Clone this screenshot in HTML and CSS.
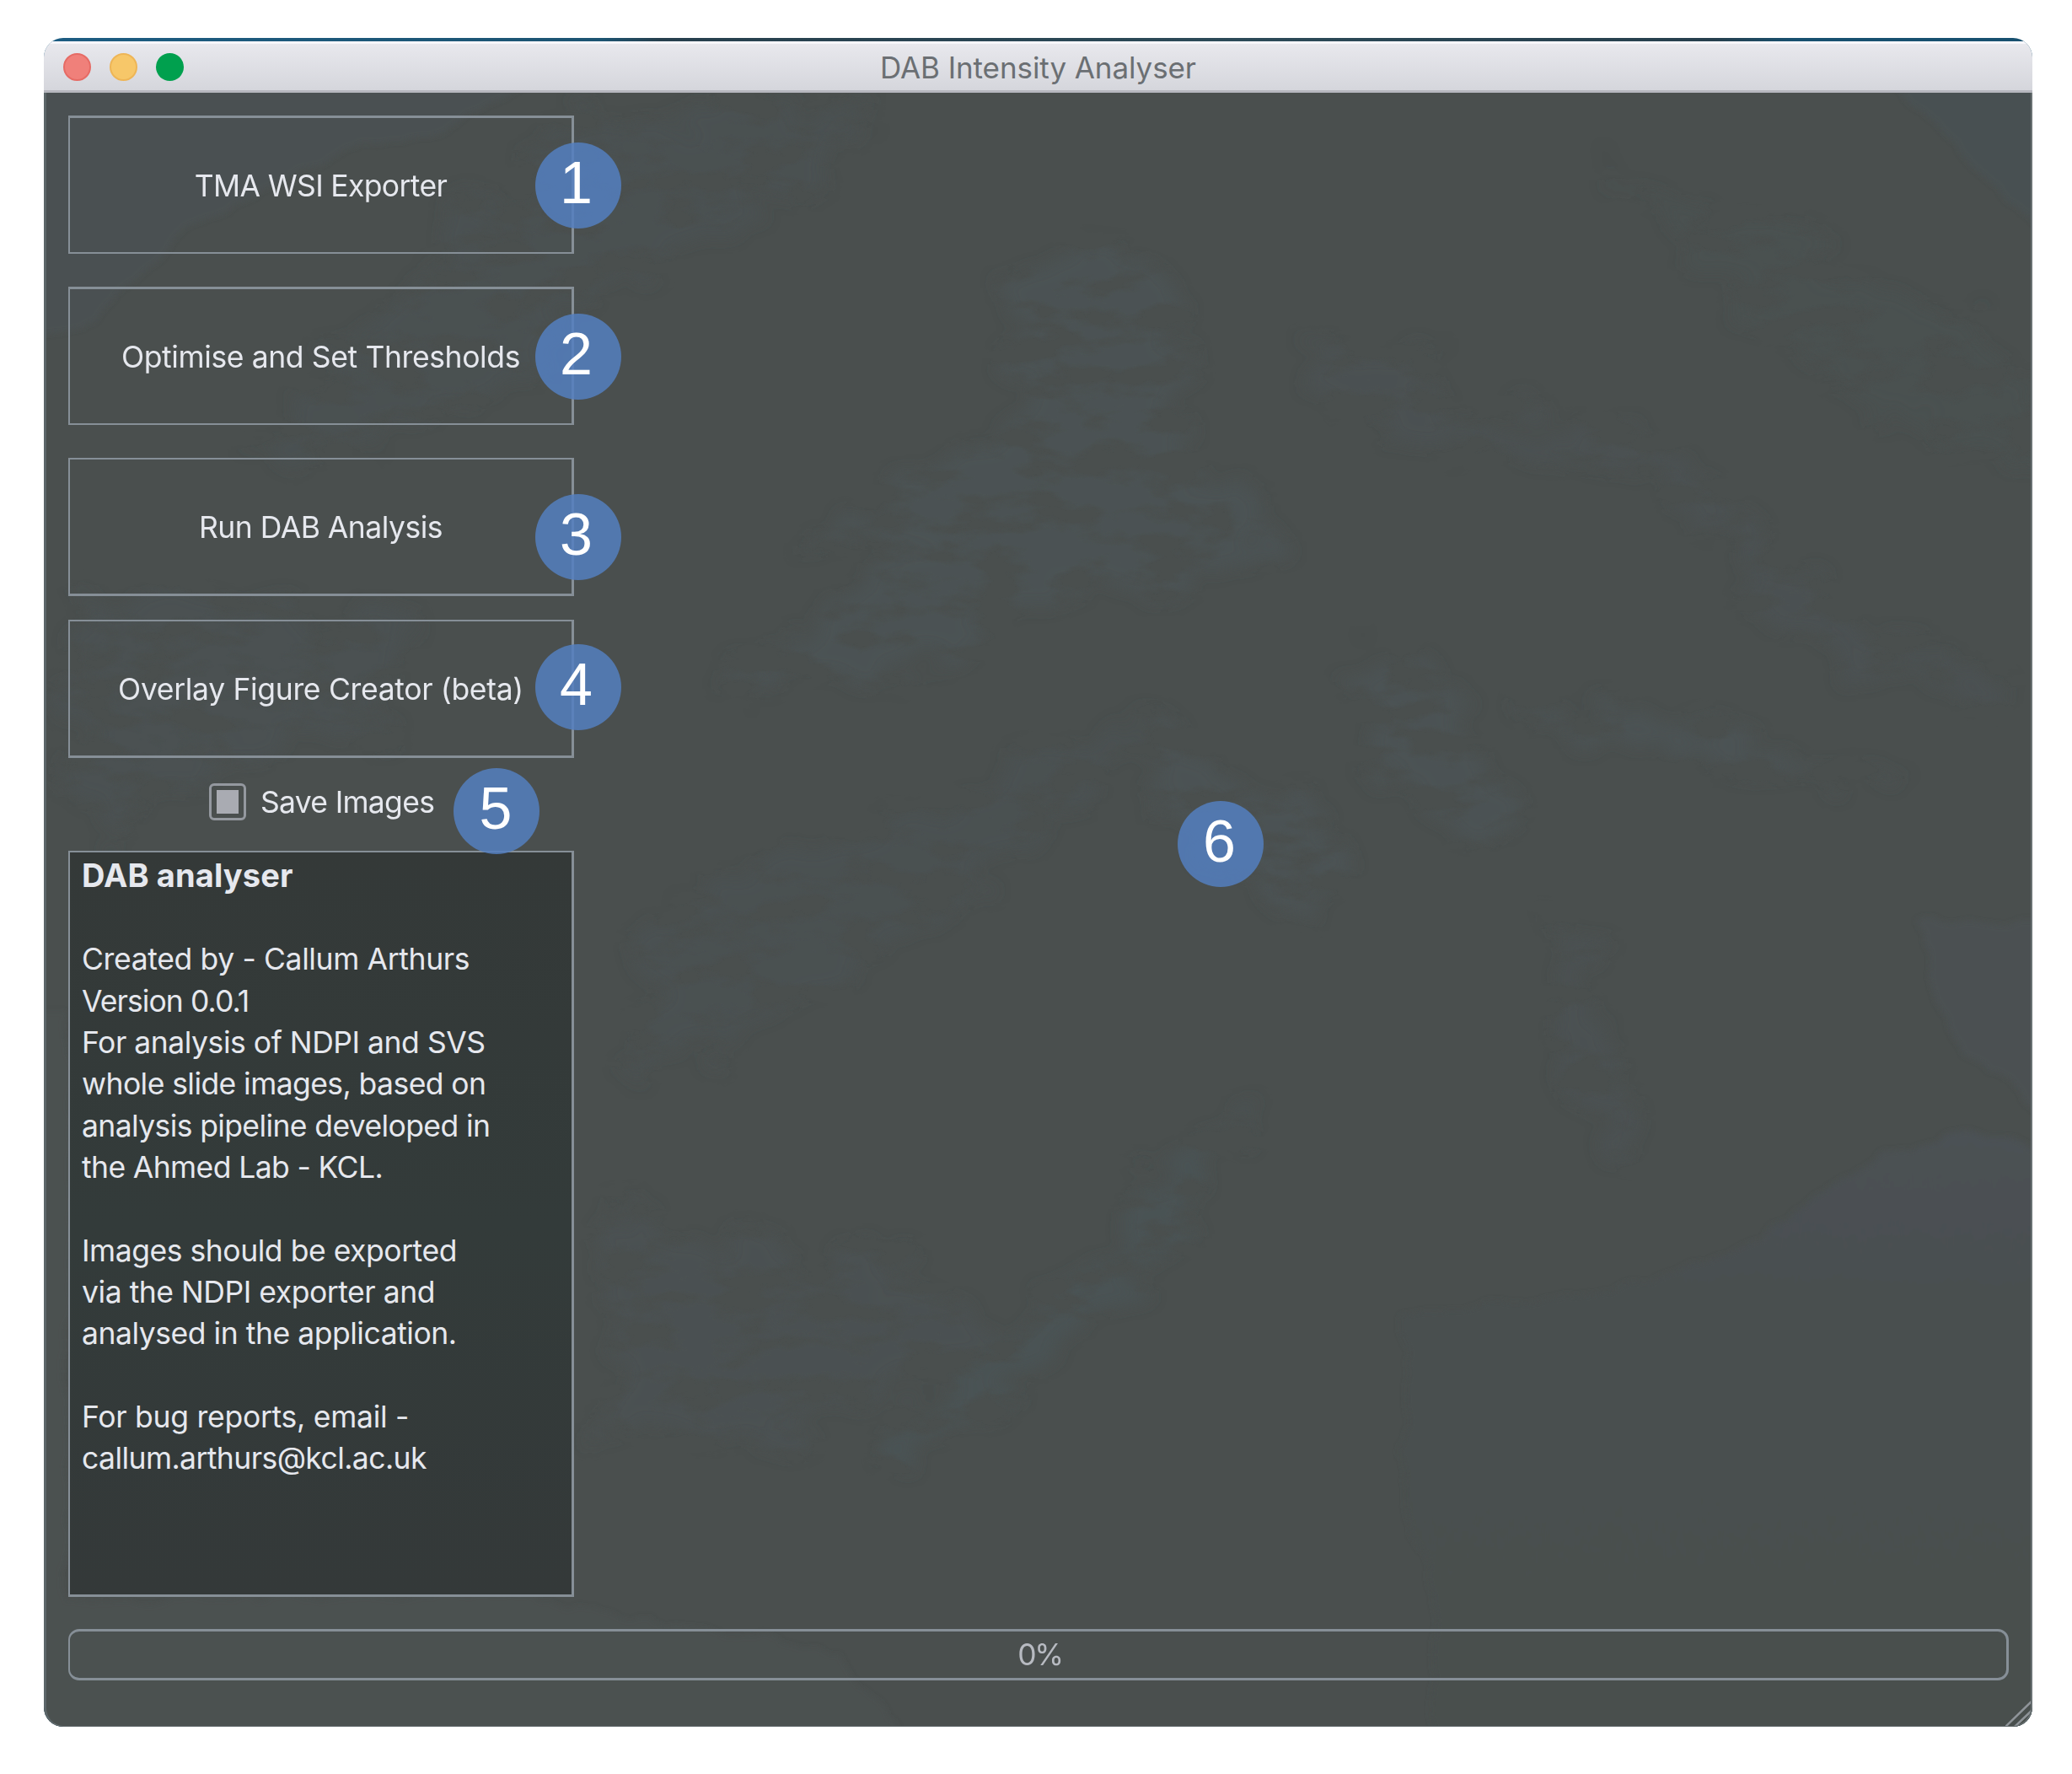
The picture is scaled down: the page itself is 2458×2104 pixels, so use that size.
FILE: index.html
```html
<!DOCTYPE html>
<html lang="en">
<head>
<meta charset="utf-8">
<title>DAB Intensity Analyser</title>
<link rel="stylesheet" href="styles.css">
</head>
<body>
<main class="window">
  <header class="titlebar">
    <div class="lights"><i class="light close"></i><i class="light minimise"></i><i class="light zoom"></i></div>
    <h1 class="title">DAB Intensity Analyser</h1>
  </header>
  <div class="content">
    <svg class="backdrop" viewBox="52 110 2359 1938" preserveAspectRatio="none" aria-hidden="true">
      <defs>
        <filter id="rough" x="-10%" y="-10%" width="120%" height="120%">
          <feTurbulence type="fractalNoise" baseFrequency="0.012 0.02" numOctaves="5" seed="4" result="n"/>
          <feDisplacementMap in="SourceGraphic" in2="n" scale="110" xChannelSelector="R" yChannelSelector="G"/>
          <feGaussianBlur stdDeviation="9" result="shape"/>
          <feTurbulence type="fractalNoise" baseFrequency="0.014 0.03" numOctaves="6" seed="11"/>
          <feColorMatrix values="0 0 0 0 1  0 0 0 0 1  0 0 0 0 1  5 0 0 0 -1.8" result="grain"/>
          <feComposite in="shape" in2="grain" operator="in"/>
        </filter>
        <filter id="edge" x="-10%" y="-10%" width="120%" height="120%">
          <feTurbulence type="fractalNoise" baseFrequency="0.02" numOctaves="3" seed="9" result="n"/>
          <feDisplacementMap in="SourceGraphic" in2="n" scale="24" xChannelSelector="R" yChannelSelector="G"/>
          <feGaussianBlur stdDeviation="3"/>
        </filter>
        <linearGradient id="lake" x1="0" y1="0" x2="0" y2="1">
          <stop offset="0" stop-color="#4b5154"/>
          <stop offset=".35" stop-color="#4a4f4f"/>
          <stop offset="1" stop-color="#4a4f4e"/>
        </linearGradient>
      </defs>
      <g filter="url(#edge)" fill="#4a5255">
        <path opacity=".55" d="M0 60H680L520 160 400 180 230 270 90 390 0 400Z"/>
        <path opacity=".6" d="M2200 60H2460V290L2380 240 2300 150Z"/>
        <path opacity=".7" fill="#4b5156" d="M2275 1092H2460V1345L2330 1250 2298 1190Z"/>
        <path fill="url(#lake)" d="M1665 1560L1930 1530 2080 1470 2200 1390 2330 1340 2460 1370V2060H1700L1700 1860 1665 1800Z"/>
        <path opacity=".25" d="M0 1200H80V1900L600 1890 1000 1960 1100 2100H0Z"/>
      </g>
      <g filter="url(#rough)" fill="#4b5457">
        <path opacity=".65" d="M1180 330L1360 300 1420 420 1400 560 1540 620 1480 680 1290 700 1060 800 850 820 1100 650 960 640 1200 500Z"/>
        <path opacity=".6" d="M1540 400L1690 440 1720 500 1900 500 2030 560 2120 680 2300 780 2400 830 2200 790 2080 710 1960 570 1740 530 1600 500Z"/>
        <path opacity=".7" d="M1340 850L1480 930 1590 1000 1580 1080 1480 1050 1390 960Z"/>
        <path opacity=".7" d="M1590 800L1680 760 1790 960 1770 1010 1700 980Z"/>
        <path opacity=".75" d="M1500 1310L1380 1490 1190 1650 1080 1740 1050 1690 1240 1560 1380 1390Z"/>
        <path opacity=".55" d="M720 1440L860 1480 1060 1500 1180 1590 900 1720 720 1690Z"/>
        <path opacity=".6" d="M1850 1080L1910 1220 1960 1400 1900 1360 1840 1200Z"/>
        <path opacity=".45" d="M760 1080L1140 960 1250 860 1340 860 1220 1010 980 1180 760 1280Z"/>
        <path opacity=".45" d="M680 140L1050 120 900 240 700 350 560 480 300 560 420 400Z"/>
        <path opacity=".5" d="M90 700L500 740 450 860 250 900 120 1000 80 900Z"/>
        <path opacity=".7" d="M1810 835L2000 860 2130 910 2240 940 2130 935 1980 885 1820 860Z"/>
        <path opacity=".35" d="M1900 200L2300 360 2430 460 2430 560 2200 480Z"/>
      </g>
    </svg>
    <div class="sidebar">
      <button class="action a1"><span class="tma">TMA WSI Exporter</span><b class="badge">1</b></button>
      <button class="action a2"><span class="optimise">Optimise and Set Thresholds</span><b class="badge">2</b></button>
      <button class="action a3"><span class="run">Run DAB Analysis</span><b class="badge">3</b></button>
      <button class="action a4"><span class="overlay">Overlay Figure Creator (beta)</span><b class="badge">4</b></button>
      <div class="save"><i class="checkbox"></i><span>Save Images</span><b class="badge">5</b></div>
      <section class="info">
        <h2>DAB analyser</h2>
        <p><span class="t1">Created by - Callum Arthurs</span><br><span class="t5">Version 0.0.1</span><br><span class="t2">For analysis of NDPI and SVS</span><br><span class="t3">whole slide images, based on</span><br><span class="t4">analysis pipeline developed in</span><br><span class="t4">the Ahmed Lab - KCL.</span></p>
        <p class="t2"><span>Images should be exported</span><br><span>via the NDPI exporter and</span><br><span>analysed in the application.</span></p>
        <p><span class="t0">For bug reports, email -</span><br><span class="t3">callum.arthurs@kcl.ac.uk</span></p>
      </section>
    </div>
    <b class="badge viewer-badge">6</b>
    <div class="progress"><span>0%</span></div>
    <svg class="grip" viewBox="0 0 32 32" aria-hidden="true"><path d="M0 32L32 1M11 32L32 12M21 32L32 22"/></svg>
  </div>
</main>
</body>
</html>
```
FILE: styles.css
```css
* { box-sizing: border-box; }

body {
  margin: 0;
  padding: 45px 47px 56px 52px;
  background: #fff;
  font-family: Inter, "Liberation Sans", sans-serif;
  font-size: 35.5px;
  color: #e6e8ee;
}

.window {
  height: 2003px;
  display: flex;
  flex-direction: column;
  border-radius: 23px;
  overflow: hidden;
  background: linear-gradient(90deg, #1c5c82, #1c5472 28%, #263f4d 31%, #2c4a58 60%, #263f4d 84%, #17506f 88%);
}

.titlebar {
  position: relative;
  flex: none;
  height: 61px;
  margin-top: 4px;
  display: flex;
  align-items: center;
  justify-content: center;
  border-bottom: 3px solid #b6b7be;
  background: linear-gradient(#f6f6fa 3px, #e8e8ed 3px, #d5d6dc);
}

.lights {
  position: absolute;
  left: 23px;
  top: 14px;
  display: flex;
  gap: 22px;
}

.light { width: 33px; height: 33px; border-radius: 50%; }
.close { background: #f0807a; border: 2px solid #e66b65; }
.minimise { background: #f7c769; border: 2px solid #eeb556; }
.zoom { background: #00a04e; }

.title {
  margin: 0;
  padding-top: 4px;
  font-size: 35px;
  font-weight: 400;
  letter-spacing: -.08px;
  color: #6b6f73;
}

.content {
  position: relative;
  flex: 1;
  display: flex;
  flex-direction: column;
  padding: 27px 28px 55px 29px;
  background: #4a4f4e;
}

.content::after {
  content: "";
  position: absolute;
  inset: 0;
  border: solid #697173;
  border-width: 0 2px 1px 3px;
  border-left-color: #5c6669;
  border-radius: 0 0 23px 23px;
}

.backdrop {
  position: absolute;
  inset: 0;
  width: 100%;
  height: 100%;
}

.sidebar {
  position: relative;
  width: 600px;
  display: flex;
  flex-direction: column;
}

.action {
  position: relative;
  display: flex;
  align-items: center;
  justify-content: center;
  height: 164px;
  padding: 2px 0 0;
  border: solid #868f97;
  border-width: 3px 3px 2px 2px;
  background: none;
  color: inherit;
  font: inherit;
  white-space: nowrap;
}

.a1, .a2 { margin-bottom: 39px; }
.a3 { margin-bottom: 28px; border-width: 2px 3px 3px 2px; }
.a4 { border-width: 2px 3px 3px 2px; }

.tma { letter-spacing: -.65px; }
.optimise { letter-spacing: -.38px; }
.run { letter-spacing: -.5px; }
.overlay { letter-spacing: -.33px; }

.badge {
  position: absolute;
  left: 552px;
  width: 102px;
  height: 102px;
  padding-right: 5px;
  border-radius: 50%;
  background: rgba(83, 127, 192, .85);
  color: #fff;
  font: 400 70px/96px "Liberation Sans", Arial, sans-serif;
  letter-spacing: 0;
  text-align: center;
}

.a1 .badge { top: 29px; }
.a2 .badge { top: 29px; }
.a3 .badge { top: 41px; }
.a4 .badge { top: 27px; }

.save {
  position: relative;
  height: 110px;
  display: flex;
  align-items: center;
  gap: 17px;
  padding: 0 0 6px 167px;
  letter-spacing: -.7px;
}

.save .badge { left: 457px; top: 12px; z-index: 1; padding-right: 2px; }

.checkbox {
  width: 44px;
  height: 44px;
  padding: 5px 6px;
  border: 3px solid #94989f;
  border-radius: 6px;
  background: #a9abb2 content-box;
}

.save span { padding-top: 1px; }

.info {
  height: 885px;
  padding: 3px 14px;
  border: solid #868f97;
  border-width: 2px 3px 3px 2px;
  background: linear-gradient(#343938, #333b3a 50%, #343939);
  line-height: 49.35px;
  white-space: nowrap;
}

.info h2 { margin: 0 0 50px; font-size: 38px; line-height: 49.35px; font-weight: 700; letter-spacing: .12px; }
.info p { margin: 0 0 49.35px; }

.t0 { letter-spacing: -.27px; }
.t1 { letter-spacing: -.36px; }
.t2 { letter-spacing: -.46px; }
.t3 { letter-spacing: -.57px; }
.t4 { letter-spacing: -.61px; }
.t5 { letter-spacing: -.92px; }

.viewer-badge { left: 1345px; top: 840px; padding-right: 3px; }

.progress {
  position: relative;
  height: 61px;
  margin-top: auto;
  display: flex;
  align-items: center;
  justify-content: center;
  padding-left: 4px;
  border: 3px solid #868f97;
  border-left-width: 2px;
  border-radius: 13px;
  color: #b7bac1;
  letter-spacing: -2.4px;
}

.grip {
  position: absolute;
  right: 0;
  bottom: 0;
  width: 32px;
  height: 32px;
  fill: none;
  stroke: #8f9499;
  stroke-width: 2.5;
}
```
